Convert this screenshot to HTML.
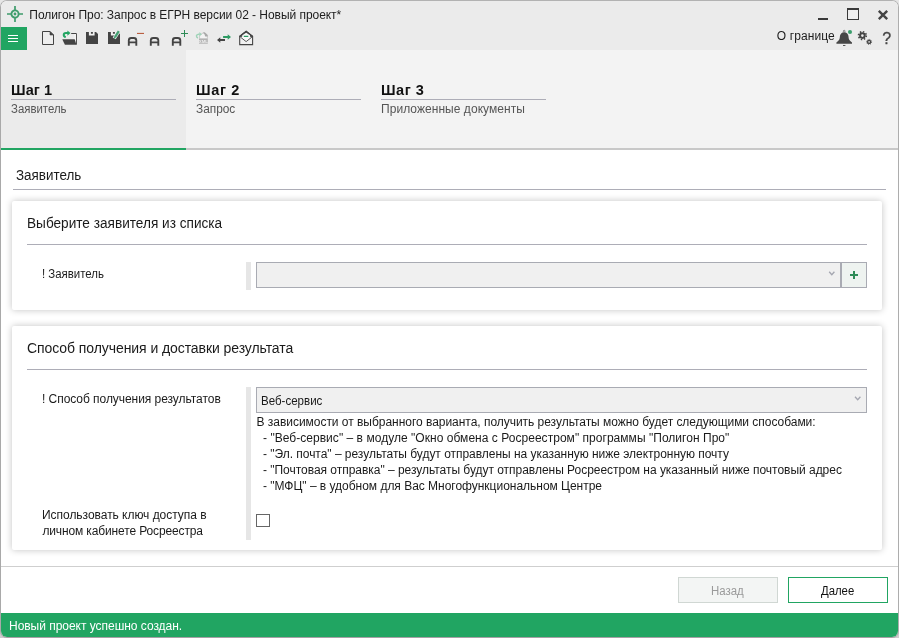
<!DOCTYPE html>
<html lang="ru">
<head>
<meta charset="utf-8">
<title>Полигон Про: Запрос в ЕГРН версии 02 - Новый проект*</title>
<style>
*{box-sizing:border-box;margin:0;padding:0}
html,body{width:899px;height:638px;overflow:hidden;background:linear-gradient(#e6e6e6 50%,#cdcdcd 50%)}
body{font-family:"Liberation Sans","DejaVu Sans",sans-serif;color:#1a1a1a;position:relative}
.win{will-change:transform;position:absolute;left:0;top:0;width:899px;height:638px;border-radius:7px;background:#fff;overflow:hidden;border:1px solid #a9a9a9;border-right-color:#adadad;border-top-color:#b2b2b2;border-bottom-color:#a89fa5}
.abs{position:absolute;white-space:nowrap}
.titlebar{left:0;top:0;width:899px;height:50px;background:#ebebeb}
.t{position:absolute;white-space:nowrap;line-height:1}
.hline{position:absolute;height:1px;background:#adadb7}
.card{position:absolute;background:#fff;border-radius:2px;box-shadow:0 0 7px rgba(0,0,0,.24)}
.vbar{position:absolute;width:5px;background:#e6e6e6}
.sel{position:absolute;height:26px;background:#f0f0f0;border:1px solid #a9abb3}
.btn{position:absolute;width:100px;height:26px;background:#fff;border:1px solid #21a562;text-align:center}
</style>
</head>
<body>
<div class="win">
<div style="position:absolute;left:-1px;top:-1px;width:899px;height:638px">

<!-- title + toolbar -->
<div class="abs titlebar"></div>
<svg class="abs" style="left:6px;top:5px" width="18" height="18" viewBox="0 0 18 18">
 <circle cx="9" cy="9" r="3.6" fill="none" stroke="#3f9c6c" stroke-width="1.9"/>
 <circle cx="9" cy="9" r="1.4" fill="#3f9c6c"/>
 <path d="M9 1v4M9 13v4M1 9h4M13 9h4" stroke="#3f9c6c" stroke-width="1.7" fill="none"/>
</svg>
<div class="t" id="title" style="letter-spacing:-0.045px;left:29.3px;top:9px;font-size:12px;color:#1c1c1c">Полигон Про: Запрос в ЕГРН версии 02 - Новый проект*</div>

<div class="abs" style="left:1px;top:27px;width:26px;height:23px;background:#21a562"></div>
<div class="abs" style="left:8px;top:35px;width:10px;height:1px;background:#fff;box-shadow:0 3px 0 #fff,0 6px 0 #fff"></div>


<svg class="abs" style="left:0;top:0" width="899" height="50" viewBox="0 0 899 50">
 <!-- new doc -->
 <path d="M42.5 31.5H50L53.5 35V44.5H42.5Z" fill="#eeeeee" stroke="#444" stroke-width="1" stroke-linejoin="miter"/>
 <path d="M50 31.5V35H53.5Z" fill="#444" stroke="#444" stroke-width=".6"/>
 <!-- open folder -->
 <path d="M71.2 33.5H76.4V44.6" fill="none" stroke="#444" stroke-width="1"/>
 <path d="M74.4 34H75.9V43H74.4Z" fill="#f6f6f6"/>
 <path d="M62.3 39.2H74.7L76.4 44.8H64.9Z" fill="#444"/>
 <path d="M65.8 37.1C63.2 36.6 62.8 33.2 66 33.1H68" fill="none" stroke="#21a562" stroke-width="2"/>
 <path d="M67.4 30.5L70.5 33.1L67.4 35.7Z" fill="#21a562"/>
 <!-- save -->
 <path d="M86 32H96L98 34V44H86Z" fill="#444"/>
 <path d="M88.9 32H94.6V35.6H88.9Z" fill="#f2f2f2"/>
 <path d="M90.9 32H92.9V33.7H90.9Z" fill="#444"/>
 <!-- save as -->
 <path d="M108 32H118L120 34V44H108Z" fill="#444"/>
 <path d="M110.9 32H116.6V35.6H110.9Z" fill="#f2f2f2"/>
 <path d="M112.9 32H114.9V33.7H112.9Z" fill="#444"/>
 <path d="M119.2 30.6L114.2 38.4" stroke="#ebebeb" stroke-width="3.6" fill="none"/>
 <path d="M118.8 31.2L115 37.2" stroke="#44a274" stroke-width="2.3" fill="none"/>
 <path d="M114.1 36.5L113.8 38.9L116 37.8Z" fill="#44a274"/>
 <!-- A- -->
 <g fill="none" stroke="#444" stroke-width="1.9">
  <path d="M128.80 45.8V40.4Q128.80 37.95 131.20 37.95H133.90Q136.30 37.95 136.30 40.4V45.8M128.80 42.3H136.30"/>
  <path d="M150.80 45.8V40.4Q150.80 37.95 153.20 37.95H155.90Q158.30 37.95 158.30 40.4V45.8M150.80 42.3H158.30"/>
  <path d="M172.80 45.8V40.4Q172.80 37.95 175.20 37.95H177.90Q180.30 37.95 180.30 40.4V45.8M172.80 42.3H180.30"/>
 </g>
 <g fill="#d4d4d4"><rect x="129.8" y="40.6" width="5.5" height="0.8"/><rect x="151.8" y="40.6" width="5.5" height="0.8"/><rect x="173.8" y="40.6" width="5.5" height="0.8"/></g>
 <path d="M137 33.4H144" stroke="#b5502e" stroke-width="1"/>
 <path d="M181 33.5H188M184.5 30V37" stroke="#2e8b57" stroke-width="1"/>
 <!-- xml (disabled) -->
 <path d="M199.6 38.8V35.6L203.4 32.6H204.8L207.4 35.2V38.8Z" fill="#f3f3f3" stroke="#c2c2c2" stroke-width=".8"/>
 <path d="M203.2 32.4H204.9L207.6 35V36.4H205.2Q204.8 33.6 203.2 33.2Z" fill="#a9a9a9"/>
 <rect x="199" y="38.7" width="8.8" height="5" fill="#b3b3b3"/>
 <text x="203.4" y="42.9" font-family="Liberation Sans,sans-serif" font-size="4.4" font-weight="bold" fill="#ededed" text-anchor="middle">XML</text>
 <path d="M198 38C195.800 37.400 195.900 34.300 198.600 34.200H199.800" fill="none" stroke="#9fd3b8" stroke-width="1.5"/>
 <path d="M199.400 32.100L201.900 34.200L199.400 36.300Z" fill="#9fd3b8"/>
 <!-- arrows -->
 <path d="M217 39.950L220.300 37.150V38.900H225V41.050H220.300V42.750Z" fill="#444"/>
 <path d="M231 37L227.700 34.200V35.950H223.100V38.100H227.700V39.800Z" fill="#2e9b63"/>
 <!-- envelope -->
 <path d="M239.700 36.300L246.150 31.300L252.600 36.300V44.600H239.700Z" fill="#f0f0f0" stroke="#444" stroke-width="1.100"/>
 <path d="M239.600 36.300L246.150 31.200L252.700 36.300L250.800 36.500L246.150 33.300L241.500 36.500Z" fill="#444" stroke="#444" stroke-width="1"/>
 <path d="M242.300 35.200L246.150 32.800L250 35.200V38.800L246.150 41.400L242.300 38.800Z" fill="#f8f8f8"/>
 <path d="M240.300 37L246.150 41.600L252 37" fill="none" stroke="#555" stroke-width="1"/>
 <path d="M243.800 36.400H248.300" stroke="#2e9b63" stroke-width="1.100"/>
 <!-- window buttons -->
 <rect x="818" y="18" width="10" height="2" fill="#3a3a3a"/>
 <rect x="847.5" y="9" width="11" height="10.5" fill="#eeeeee" stroke="#3a3a3a" stroke-width="1"/>
 <rect x="847" y="8" width="12" height="2" fill="#3a3a3a"/>
 <path d="M878.8 10.8L887.2 19.2M887.2 10.8L878.8 19.2" stroke="#444" stroke-width="2.4" fill="none"/>
 <!-- bell -->
 <path d="M839.9 36.600A4.300 4.400 0 0 1 848.500 36.600C848.600 39.400 849.200 40.700 852 42.500V43.700H836.400V42.500C839.200 40.700 839.800 39.400 839.900 36.600Z" fill="#464646"/>
 <circle cx="844.2" cy="31.2" r="0.9" fill="none" stroke="#6a6a6a" stroke-width=".8"/>
 <rect x="843" y="45" width="2.4" height="1" fill="#555"/>
 <circle cx="850" cy="32" r="2.05" fill="#3a9e6c"/>
 <!-- gears -->
 <g fill="none" stroke="#444">
  <circle cx="862.4" cy="35.6" r="2.3" stroke-width="2"/>
  <circle cx="862.4" cy="35.6" r="3.9" stroke-width="1.6" stroke-dasharray="1.45 1.613"/>
  <circle cx="869.1" cy="41.9" r="1.5" stroke-width="1.4"/>
  <circle cx="869.1" cy="41.9" r="2.5" stroke-width="0.9" stroke-dasharray="1 0.963"/>
 </g>
 <text x="886.7" y="44" font-family="Liberation Sans,sans-serif" font-size="16" fill="#444" stroke="#444" stroke-width=".3" text-anchor="middle">?</text>
</svg>
<div class="t" id="og" style="letter-spacing:.1px;left:776.8px;top:30px;font-size:12px;color:#1c1c1c">О границе</div>

<!-- steps -->
<div class="abs" style="left:0;top:50px;width:899px;height:100px;background:#f3f3f3"></div>
<div class="abs" style="left:0;top:50px;width:186px;height:100px;background:#ebebeb"></div>
<div class="abs" style="left:0;top:148px;width:899px;height:2px;background:#c8c8c8"></div>
<div class="abs" style="left:0;top:148px;width:186px;height:2px;background:#21a562"></div>

<div class="t" id="s1" style="letter-spacing:0.1px;left:11px;top:83px;font-size:14.5px;font-weight:bold;color:#111">Шаг 1</div>
<div class="hline" style="left:11px;top:99px;width:165px"></div>
<div class="t" id="s1s" style="transform:scaleX(0.95);transform-origin:0 0;left:11px;top:103px;font-size:12px;color:#555">Заявитель</div>

<div class="t" id="s2" style="letter-spacing:0.65px;left:196px;top:83px;font-size:14.5px;font-weight:bold;color:#111">Шаг 2</div>
<div class="hline" style="left:196px;top:99px;width:165px"></div>
<div class="t" id="s2s" style="transform:scaleX(0.988);transform-origin:0 0;left:196px;top:103px;font-size:12px;color:#555">Запрос</div>

<div class="t" id="s3" style="letter-spacing:0.5px;left:381px;top:83px;font-size:14.5px;font-weight:bold;color:#111">Шаг 3</div>
<div class="hline" style="left:381px;top:99px;width:165px"></div>
<div class="t" id="s3s" style="letter-spacing:0.05px;left:381px;top:103px;font-size:12px;color:#555">Приложенные документы</div>

<!-- content -->
<div class="t" id="h0" style="transform:scaleX(0.958);transform-origin:0 0;left:15.5px;top:168px;font-size:14px">Заявитель</div>
<div class="hline" style="left:13px;top:189px;width:873px"></div>

<div class="card" style="left:12px;top:201px;width:870px;height:109px"></div>
<div class="t" id="c1t" style="transform:scaleX(0.973);transform-origin:0 0;left:26.7px;top:216px;font-size:14px">Выберите заявителя из списка</div>
<div class="hline" style="left:27px;top:244px;width:840px"></div>
<div class="t" id="c1l" style="transform:scaleX(0.952);transform-origin:0 0;left:42px;top:268px;font-size:12px">! Заявитель</div>
<div class="vbar" style="left:246px;top:262px;height:28px"></div>
<div class="sel" style="left:256px;top:262px;width:585px"></div>
<div class="sel" style="left:841px;top:262px;width:26px;background:#eef3f0"></div>
<svg class="abs" style="left:820px;top:262px" width="50" height="26" viewBox="820 262 50 26">
 <path d="M829.2 271.8L831.8 274.8L834.4 271.8" fill="none" stroke="#a4a6b0" stroke-width="1.3"/>
 <path d="M850 275H858M854 271V279" stroke="#2e8b57" stroke-width="2" fill="none"/>
</svg>

<div class="card" style="left:12px;top:326px;width:870px;height:224px"></div>
<div class="t" id="c2t" style="letter-spacing:-0.075px;left:27px;top:341px;font-size:14px">Способ получения и доставки результата</div>
<div class="hline" style="left:27px;top:369px;width:840px"></div>
<div class="t" id="c2l" style="letter-spacing:-0.05px;left:42px;top:393px;font-size:12px">! Способ получения результатов</div>
<div class="vbar" style="left:246px;top:387px;height:153px"></div>
<div class="sel" style="left:256px;top:387px;width:611px"></div>
<svg class="abs" style="left:850px;top:387px" width="16" height="26" viewBox="850 387 16 26">
 <path d="M855 396.8L857.7 399.8L860.4 396.8" fill="none" stroke="#a4a6b0" stroke-width="1.3"/>
</svg>
<div class="t" id="c2v" style="transform:scaleX(0.961);transform-origin:0 0;left:261px;top:395px;font-size:12px">Веб-сервис</div>

<div class="t" id="p1" style="letter-spacing:-0.03px;left:256.5px;top:416px;font-size:12px">В зависимости от выбранного варианта, получить результаты можно будет следующими способами:</div>
<div class="t" id="p2" style="letter-spacing:0.035px;left:263px;top:432px;font-size:12px">- "Веб-сервис" – в модуле "Окно обмена с Росреестром" программы "Полигон Про"</div>
<div class="t" id="p3" style="letter-spacing:-0.028px;left:263px;top:448px;font-size:12px">- "Эл. почта" – результаты будут отправлены на указанную ниже электронную почту</div>
<div class="t" id="p4" style="letter-spacing:-0.027px;left:263px;top:464px;font-size:12px">- "Почтовая отправка" – результаты будут отправлены Росреестром на указанный ниже почтовый адрес</div>
<div class="t" id="p5" style="letter-spacing:-0.02px;left:263px;top:480px;font-size:12px">- "МФЦ" – в удобном для Вас Многофункциональном Центре</div>

<div class="t" id="k1" style="letter-spacing:-0.035px;left:42px;top:509px;font-size:12px">Использовать ключ доступа в</div>
<div class="t" id="k2" style="letter-spacing:-0.13px;left:42.4px;top:525px;font-size:12px">личном кабинете Росреестра</div>
<div class="abs" style="left:256px;top:514px;width:14px;height:13px;border:1px solid #666;background:#fff"></div>

<!-- footer -->
<div class="hline" style="left:0;top:566px;width:899px;background:#cfcfcf"></div>
<div class="btn" style="left:678px;top:577px;border-color:#d0d7d3;background:#f3f5f4"></div>
<div class="t" id="b1" style="transform:scaleX(0.953);transform-origin:0 0;left:711px;top:585px;font-size:12px;color:#9a9a9a">Назад</div>
<div class="btn" style="left:788px;top:577px"></div>
<div class="t" id="b2" style="transform:scaleX(0.945);transform-origin:0 0;left:820.5px;top:585px;font-size:12px;color:#111">Далее</div>

<div class="abs" style="left:0;top:613px;width:899px;height:25px;background:#21a562"></div>
<div class="t" id="st" style="letter-spacing:-0.03px;left:9px;top:620px;font-size:12px;color:#fff">Новый проект успешно создан.</div>

</div>
</div>
</body>
</html>
